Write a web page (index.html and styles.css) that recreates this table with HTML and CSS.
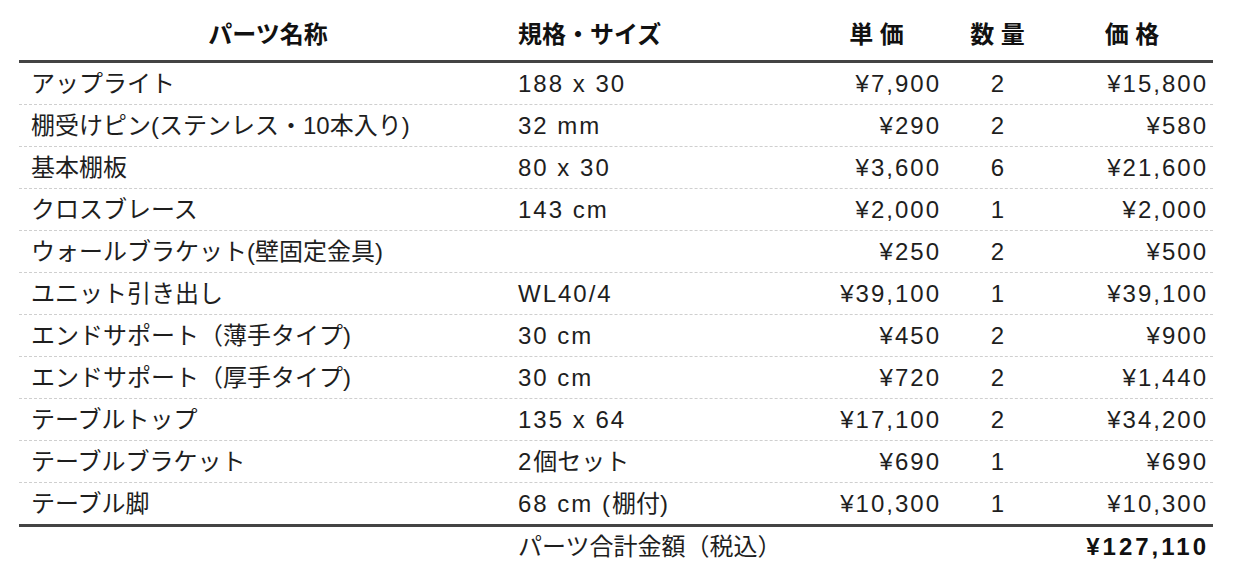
FILE: index.html
```html
<!DOCTYPE html>
<html lang="ja">
<head>
<meta charset="utf-8">
<title>パーツ一覧</title>
<link rel="stylesheet" href="styles.css">
</head>
<body>
<div class="parts">
  <div class="row head">
    <div class="c name">パーツ名称</div>
    <div class="c spec">規格・サイズ</div>
    <div class="c unit">単 価</div>
    <div class="c qty">数 量</div>
    <div class="c price">価 格</div>
  </div>
  <div class="row item">
    <div class="c name">アップライト</div><div class="c spec">188 x 30</div><div class="c unit">¥7,900</div><div class="c qty">2</div><div class="c price">¥15,800</div>
  </div>
  <div class="row item">
    <div class="c name">棚受けピン(ステンレス・10本入り)</div><div class="c spec">32 mm</div><div class="c unit">¥290</div><div class="c qty">2</div><div class="c price">¥580</div>
  </div>
  <div class="row item">
    <div class="c name">基本棚板</div><div class="c spec">80 x 30</div><div class="c unit">¥3,600</div><div class="c qty">6</div><div class="c price">¥21,600</div>
  </div>
  <div class="row item">
    <div class="c name">クロスブレース</div><div class="c spec">143 cm</div><div class="c unit">¥2,000</div><div class="c qty">1</div><div class="c price">¥2,000</div>
  </div>
  <div class="row item">
    <div class="c name">ウォールブラケット(壁固定金具)</div><div class="c spec"></div><div class="c unit">¥250</div><div class="c qty">2</div><div class="c price">¥500</div>
  </div>
  <div class="row item">
    <div class="c name">ユニット引き出し</div><div class="c spec">WL40/4</div><div class="c unit">¥39,100</div><div class="c qty">1</div><div class="c price">¥39,100</div>
  </div>
  <div class="row item">
    <div class="c name">エンドサポート（薄手タイプ)</div><div class="c spec">30 cm</div><div class="c unit">¥450</div><div class="c qty">2</div><div class="c price">¥900</div>
  </div>
  <div class="row item">
    <div class="c name">エンドサポート（厚手タイプ)</div><div class="c spec">30 cm</div><div class="c unit">¥720</div><div class="c qty">2</div><div class="c price">¥1,440</div>
  </div>
  <div class="row item">
    <div class="c name">テーブルトップ</div><div class="c spec">135 x 64</div><div class="c unit">¥17,100</div><div class="c qty">2</div><div class="c price">¥34,200</div>
  </div>
  <div class="row item">
    <div class="c name">テーブルブラケット</div><div class="c spec"><span class="n">2</span>個セット</div><div class="c unit">¥690</div><div class="c qty">1</div><div class="c price">¥690</div>
  </div>
  <div class="row item last">
    <div class="c name">テーブル脚</div><div class="c spec"><span class="n">68 cm (</span>棚付<span class="n">)</span></div><div class="c unit">¥10,300</div><div class="c qty">1</div><div class="c price">¥10,300</div>
  </div>
  <div class="row total">
    <div class="c name"></div>
    <div class="c spec label">パーツ合計金額（税込）</div>
    <div class="c price sum">¥127,110</div>
  </div>
</div>
</body>
</html>
```

FILE: styles.css
```css
html, body {
  margin: 0;
  padding: 0;
  background: #ffffff;
}

body {
  font-family: "Liberation Sans", "Noto Sans CJK JP", sans-serif;
  font-size: 24px;
  color: #1e1e1e;
}

.parts {
  width: 1194px;
  margin: 9px 0 0 19px;
}

.row {
  display: grid;
  grid-template-columns: 498px 295px 129px 113px 159px;
  align-items: center;
  line-height: 28px;
}

.head {
  height: 51px;
  border-bottom: 3px solid #444444;
  font-weight: bold;
  color: #111111;
}

.item {
  height: 41px;
  border-bottom: 1px dashed #cfcfcf;
}

.item.last {
  border-bottom: none;
}

.total {
  height: 40px;
  border-top: 3px solid #444444;
}

.c {
  white-space: nowrap;
}

.item .name {
  padding-left: 12px;
}

.head .name {
  text-align: center;
}

.spec {
  padding-left: 1px;
}

.item .spec {
  letter-spacing: 2px;
}

.item .spec:has(.n) {
  letter-spacing: 0;
}

.item .spec .n {
  letter-spacing: 2px;
}

.unit {
  text-align: right;
}

.item .unit {
  letter-spacing: 2px;
}

.head .unit {
  text-align: center;
}

.qty {
  text-align: center;
}

.price {
  text-align: right;
  padding-right: 5px;
}

.item .price {
  letter-spacing: 2px;
}

.head .price {
  text-align: center;
  padding-right: 3px;
}

.total .label {
  grid-column: 2 / 5;
}

.total .sum {
  grid-column: 5;
  font-weight: bold;
  color: #111111;
  letter-spacing: 3px;
  padding-right: 4px;
}
```
